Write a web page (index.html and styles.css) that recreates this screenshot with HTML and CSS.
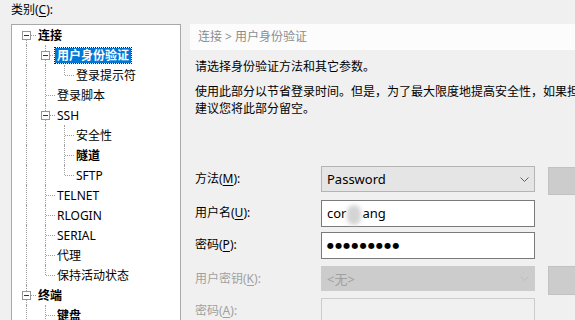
FILE: index.html
```html
<!DOCTYPE html>
<html>
<head>
    <title>会话选项 - 用户身份验证</title>
    <link rel="stylesheet" href="styles.css">
</head>
<body>

    <div class="dialog">

        <!-- Category tree -->
        <div class="left">
            <div class="cat-label">类别(<u>C</u>):</div>
            <div class="tree">
                <div class="row"><span class="c b top"><i class="box"></i></span><span class="lbl bold">连接</span></div>
                <div class="row"><span class="c v"></span><span class="c b"><i class="box"></i></span><span class="lbl bold sel">用户身份验证</span></div>
                <div class="row"><span class="c v"></span><span class="c v"></span><span class="c l"></span><span class="lbl">登录提示符</span></div>
                <div class="row"><span class="c v"></span><span class="c t"></span><span class="lbl">登录脚本</span></div>
                <div class="row"><span class="c v"></span><span class="c b"><i class="box"></i></span><span class="lbl">SSH</span></div>
                <div class="row"><span class="c v"></span><span class="c v"></span><span class="c t"></span><span class="lbl">安全性</span></div>
                <div class="row"><span class="c v"></span><span class="c v"></span><span class="c t"></span><span class="lbl bold">隧道</span></div>
                <div class="row"><span class="c v"></span><span class="c v"></span><span class="c l"></span><span class="lbl">SFTP</span></div>
                <div class="row"><span class="c v"></span><span class="c t"></span><span class="lbl">TELNET</span></div>
                <div class="row"><span class="c v"></span><span class="c t"></span><span class="lbl">RLOGIN</span></div>
                <div class="row"><span class="c v"></span><span class="c t"></span><span class="lbl">SERIAL</span></div>
                <div class="row"><span class="c v"></span><span class="c t"></span><span class="lbl">代理</span></div>
                <div class="row"><span class="c v"></span><span class="c l"></span><span class="lbl">保持活动状态</span></div>
                <div class="row"><span class="c b"><i class="box"></i></span><span class="lbl bold">终端</span></div>
                <div class="row"><span class="c v"></span><span class="c t"></span><span class="lbl bold">键盘</span></div>
            </div>
        </div>

        <!-- Settings panel -->
        <div class="panel">
            <div class="crumb">连接 &gt; 用户身份验证</div>
            <p class="desc">请选择身份验证方法和其它参数。</p>
            <p class="desc">使用此部分以节省登录时间。但是，为了最大限度地提高安全性，如果担心安全性问题，<br>建议您将此部分留空。</p>

            <div class="form">
                <label class="flabel">方法(<u>M</u>):</label>
                <div class="select">
                    <span>Password</span>
                    <svg class="chev" width="9" height="5" viewBox="0 0 9 5"><polyline points="0.5,0.5 4.5,4.5 8.5,0.5" fill="none" stroke="#606060" stroke-width="1"/></svg>
                </div>
                <div class="btn"></div>

                <label class="flabel">用户名(<u>U</u>):</label>
                <div class="input">cor<span class="blur"></span>ang</div>
                <div></div>

                <label class="flabel">密码(<u>P</u>):</label>
                <div class="input pass">●●●●●●●●●</div>
                <div></div>

                <label class="flabel off">用户密钥(<u>K</u>):</label>
                <div class="select off">
                    <span>&lt;无&gt;</span>
                    <svg class="chev" width="9" height="5" viewBox="0 0 9 5"><polyline points="0.5,0.5 4.5,4.5 8.5,0.5" fill="none" stroke="#bdbdbd" stroke-width="1"/></svg>
                </div>
                <div class="btn low"></div>

                <label class="flabel off">密码(<u>A</u>):</label>
                <div class="input off"></div>
                <div></div>
            </div>
        </div>

    </div>

</body>
</html>
```

FILE: styles.css
```css
body {
    margin: 0;
    width: 575px;
    height: 320px;
    overflow: hidden;
    background: #f0f0f0;
    color: #000;
    font-family: "Noto Sans", "Noto Sans CJK SC", sans-serif;
    font-size: 12px;
}
u { text-decoration: underline; text-underline-offset: 2px; }

.dialog { display: flex; }

/* left: category tree */
.left { flex: none; width: 170px; padding-left: 11px; }
.cat-label { height: 24px; line-height: 20px; }
.tree {
    height: 300px;
    background: #fff;
    border: 1px solid #a9a9a9;
    padding-left: 5px;
}
.row { display: flex; align-items: center; height: 20px; }
.c { flex: none; position: relative; width: 19px; height: 20px; }
.c::before, .c::after { content: ""; position: absolute; }
.c.v::before, .c.t::before, .c.b::before {
    left: 9px; top: 0; bottom: 0;
    border-left: 1px dotted #a0a0a0;
}
.c.l::before { left: 9px; top: 0; height: 10px; border-left: 1px dotted #a0a0a0; }
.c.b.top::before { top: 10px; }
.c.t::after, .c.l::after, .c.b::after {
    left: 10px; top: 10px; width: 9px;
    border-top: 1px dotted #a0a0a0;
}
.box {
    position: absolute;
    left: 5px; top: 6px;
    width: 7px; height: 7px;
    border: 1px solid #969696;
    background: #fff;
    z-index: 1;
}
.box::after {
    content: "";
    position: absolute;
    left: 1px; top: 3px;
    width: 5px; height: 1px;
    background: #333;
}
.lbl { padding: 0 2px; line-height: 15px; white-space: nowrap; }
.bold { font-weight: bold; }
.sel { background: #0078d7; color: #fff; outline: 1px dotted #202020; }

/* right: settings panel */
.panel { flex: none; width: 600px; margin-left: 9px; padding-top: 24px; }
.crumb {
    height: 26px;
    line-height: 26px;
    padding-left: 8px;
    background: #fcfcfc;
    color: #8c8c8c;
}
.desc { margin: 8px 0 5px 5px; line-height: 17px; white-space: nowrap; }

.form {
    display: grid;
    grid-template-columns: 126px 214px 93px;
    grid-template-rows: 34px 32px 34px 32px 30px;
    align-items: start;
    margin-top: 49px;
    padding-left: 5px;
}
.flabel { line-height: 26px; white-space: nowrap; }
.flabel.off { color: #a0a0a0; }

.select {
    box-sizing: border-box;
    height: 26px;
    display: flex;
    align-items: center;
    justify-content: space-between;
    padding: 0 4px 0 5px;
    background: #e5e5e5;
    border: 1px solid #b4b4b4;
    font-size: 13px;
}
.select.off { height: 25px; background: #cccccc; border-color: #cccccc; color: #a0a0a0; }
.chev { margin-right: 1px; }

.input {
    box-sizing: border-box;
    height: 27px;
    line-height: 25px;
    padding-left: 5px;
    background: #fff;
    border: 1px solid #7a7a7a;
    font-size: 13px;
}
.input.off { height: 30px; background: #f0f0f0; border-color: #cccccc; }
.blur {
    display: inline-block;
    width: 14px;
    height: 20px;
    vertical-align: middle;
    background: #d4d4d4;
    border-radius: 7px;
    filter: blur(2px);
    margin: 0 1px;
}
.pass { font-family: "DejaVu Sans", sans-serif; font-size: 8px; letter-spacing: 1.2px; }

.btn {
    box-sizing: border-box;
    height: 28px;
    margin: 1px 0 0 13px;
    background: #cccccc;
    border: 1px solid #c2c2c2;
}
.btn.low { margin-top: 0; height: 29px; }
```
